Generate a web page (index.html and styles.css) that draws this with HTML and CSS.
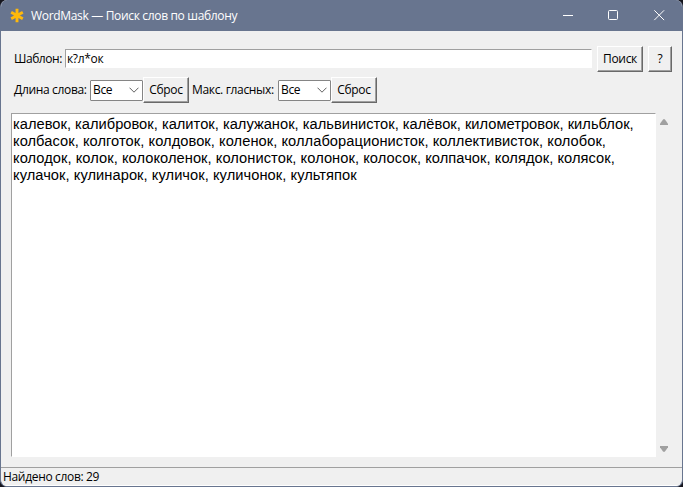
FILE: index.html
```html
<!DOCTYPE html>
<html lang="ru">
<head>
<meta charset="utf-8">
<title>WordMask — Поиск слов по шаблону</title>
<link rel="stylesheet" href="styles.css">
</head>
<body>
<div class="window">
  <header class="titlebar">
    <svg class="logo" width="14" height="16" viewBox="0 0 14 16"><path d="M7 .8v13.400M1.200 4.200l11.600 6.600M12.800 4.200l-11.600 6.600" stroke="#ffb90a" stroke-width="2.9" fill="none"/></svg>
    <span class="title">WordMask — Поиск слов по шаблону</span>
    <div class="controls">
      <svg width="46" height="31" viewBox="0 0 46 31"><path d="M18 15.5h10"/></svg>
      <svg width="46" height="31" viewBox="0 0 46 31"><rect x="17.5" y="10.5" width="9" height="9" rx="1"/></svg>
      <svg width="46" height="31" viewBox="0 0 46 31"><path d="M17.3 10.3l9.8 9.8M27.1 10.3l-9.8 9.8"/></svg>
    </div>
  </header>
  <main class="content">
    <div class="row search">
      <span class="label pattern">Шаблон:</span>
      <div class="entry">к?л*ок</div>
      <div class="button find">Поиск</div>
      <div class="button help">?</div>
    </div>
    <div class="row filters">
      <span class="label length">Длина слова:</span>
      <div class="combo">Все<svg width="10" height="6" viewBox="0 0 10 6"><path d="M.5.7L5 5.2 9.500.7"/></svg></div>
      <div class="button">Сброс</div>
      <span class="label vowels">Макс. гласных:</span>
      <div class="combo">Все<svg width="10" height="6" viewBox="0 0 10 6"><path d="M.5.7L5 5.2 9.500.7"/></svg></div>
      <div class="button">Сброс</div>
    </div>
    <div class="results">
      <div class="text"><span class="first">калевок, калибровок, калиток, калужанок, кальвинисток, калёвок, километровок, кильблок,</span><br>колбасок, колготок, колдовок, коленок, коллаборационисток, коллективисток, колобок,<br>колодок, колок, колоколенок, колонисток, колонок, колосок, колпачок, колядок, колясок,<br>кулачок, кулинарок, куличок, куличонок, культяпок</div>
      <div class="scrollbar">
        <svg width="8" height="6" viewBox="0 0 8 6"><path d="M3.200.2h1.600L8 4.700V6H0V4.700z"/></svg>
        <svg width="8" height="6" viewBox="0 0 8 6"><path d="M0 0h8v1.300L4.800 5.800H3.200L0 1.300z"/></svg>
      </div>
    </div>
  </main>
  <footer class="status"><span>Найдено слов: 29</span></footer>
</div>
</body>
</html>
```
FILE: styles.css
```css
* { box-sizing: border-box; }
body {
  margin: 0;
  width: 683px;
  height: 487px;
  overflow: hidden;
  background: #15151d;
  font: 12px/16px "Open Sans", "Noto Sans", sans-serif;
  letter-spacing: -0.33px;
  color: #000;
  white-space: nowrap;
}
.window {
  height: 487px;
  display: flex;
  flex-direction: column;
  border: 1px solid #68758f;
  border-top: 0;
  border-radius: 7px;
  background: #f0f0f0;
  overflow: hidden;
}
.titlebar {
  height: 31px;
  flex: none;
  display: flex;
  align-items: center;
  padding-left: 9px;
  background: #68758f;
  color: #fff;
}
.logo { margin-right: 7px; }
.controls { display: flex; margin-left: auto; margin-right: -1px; }
.controls svg { fill: none; stroke: #fff; stroke-width: 1; }
.content { flex: 1; padding: 15px 10px 0; }
.row { display: flex; align-items: center; height: 26px; }
.label { flex: none; padding-left: 3px; }
.pattern { width: 54px; letter-spacing: -0.45px; }
.length { width: 79px; }
.vowels { width: 89px; }
.entry {
  flex: 1;
  height: 19px;
  margin-bottom: 1px;
  padding-left: 1px;
  line-height: 18px;
  border: 1px solid #fff;
  border-top-color: #a0a0a0;
  border-left-color: #a0a0a0;
  background: #fff;
}
.button {
  width: 46px;
  height: 26px;
  line-height: 24px;
  text-align: center;
  border: 1px solid #fff;
  border-right-color: #696969;
  border-bottom-color: #696969;
  box-shadow: inset -1px -1px #a0a0a0;
}
.find { margin-left: 5px; }
.help { width: 24px; margin-left: 5px; }
.filters { margin-top: 5px; }
.combo {
  width: 53px;
  height: 21px;
  display: flex;
  align-items: center;
  justify-content: space-between;
  padding: 0 3px 0 2px;
  border: 1px solid #858585;
  border-radius: 1px;
  background: #fff;
}
.combo svg { fill: none; stroke: #606060; }
.results { display: flex; height: 344px; margin-top: 10px; }
.text {
  width: 645px;
  padding: 2px 0 0 1px;
  border: 1px solid #fff;
  border-top-color: #a0a0a0;
  border-left-color: #a0a0a0;
  background: #fff;
  font: 14.667px/17px "Liberation Sans", Arial, sans-serif;
  letter-spacing: 0.055px;
}
.first { letter-spacing: 0.015px; }
.scrollbar {
  display: flex;
  flex-direction: column;
  justify-content: space-between;
  padding: 6px 0 5px 4px;
}
.scrollbar svg { fill: #a0a0a0; }
.status {
  height: 19px;
  padding-left: 2px;
  line-height: 18px;
  border-top: 1px solid #a0a0a0;
  border-bottom: 1px solid #fff;
}
```
